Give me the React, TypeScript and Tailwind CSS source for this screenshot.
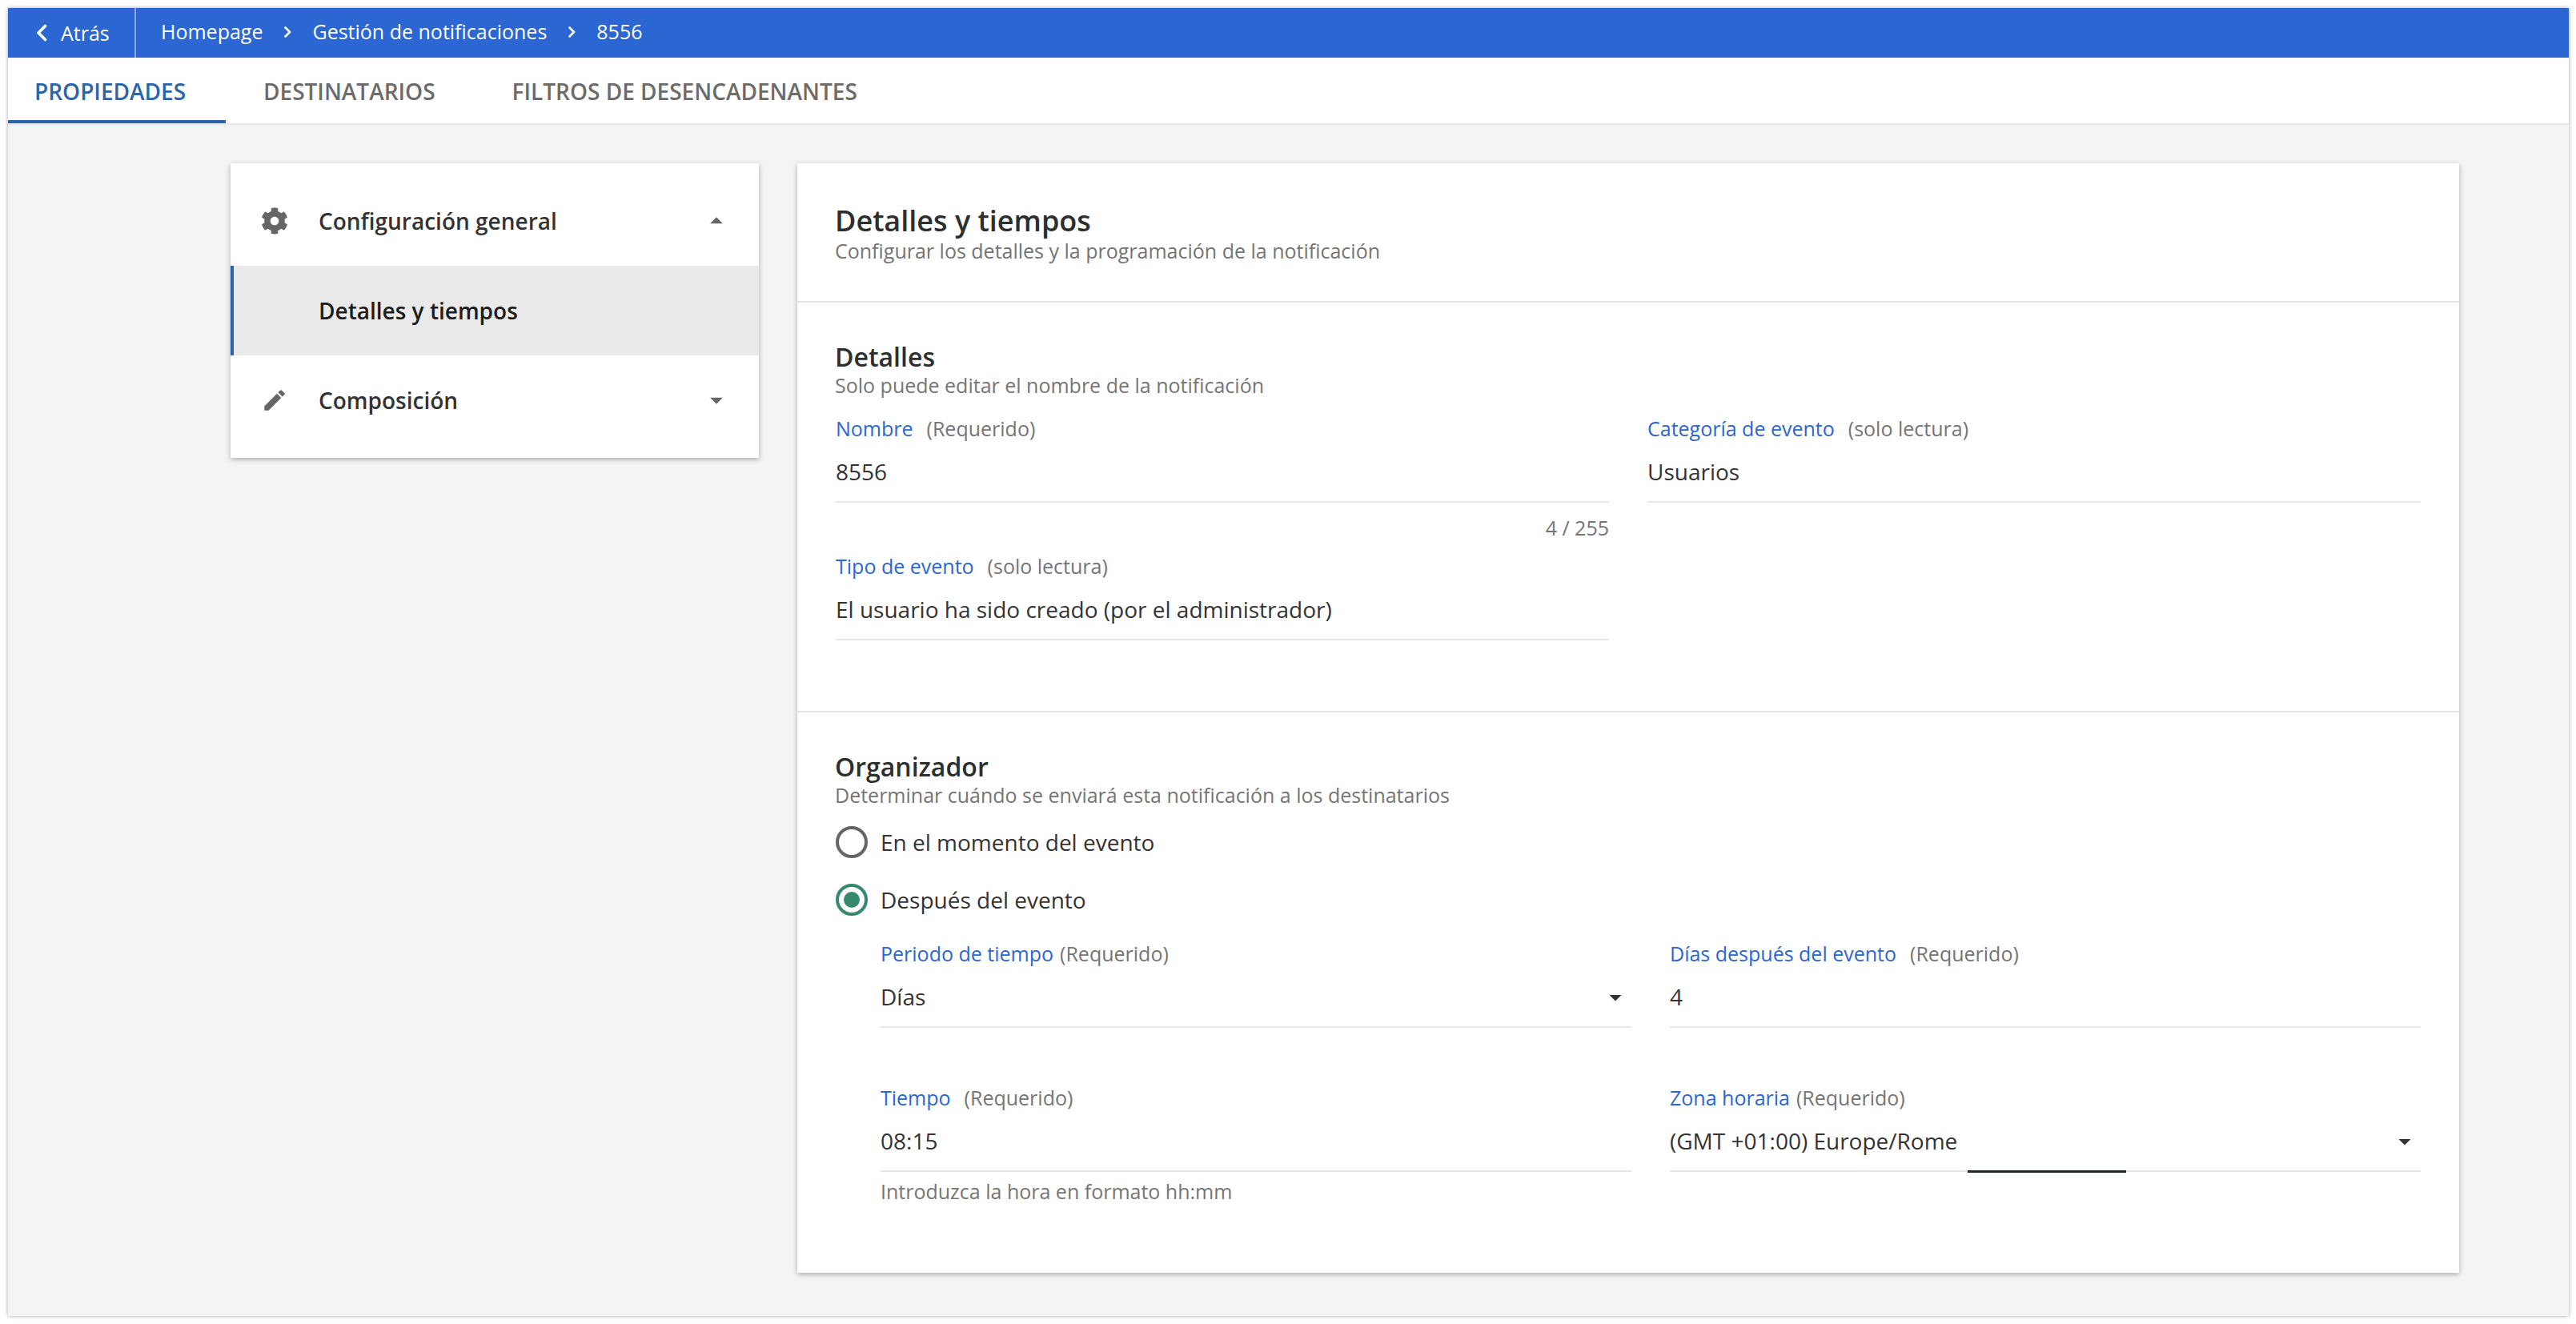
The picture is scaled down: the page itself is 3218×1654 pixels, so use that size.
import { FaCog } from "react-icons/fa";
import { MdArrowDropDown, MdArrowDropUp, MdEdit } from "react-icons/md";

const Chevron = ({ className }: { className: string }) => (
  <svg viewBox="0 0 14 22" className={className} fill="none" stroke="currentColor" strokeWidth="3.6" strokeLinecap="round" strokeLinejoin="round">
    <path d="M11.5 2.5 3 11l8.5 8.5" />
  </svg>
);

const Crumb = () => (
  <svg viewBox="0 0 10 14" className="w-[10px] h-[14px] mx-[26px] text-white" fill="none" stroke="currentColor" strokeWidth="2.6" strokeLinecap="round" strokeLinejoin="round">
    <path d="M2.5 1.5 8 7l-5.500 5.500" />
  </svg>
);

type FieldProps = {
  label: string;
  hint: string;
  value: string;
  hintGap?: string;
  dropdown?: boolean;
  children?: React.ReactNode;
};

const Field = ({ label, hint, value, hintGap = "ml-[17px]", dropdown, children }: FieldProps) => (
  <div className="relative">
    <div className="h-[28px] leading-[28px] text-[25px] whitespace-nowrap">
      <span className="text-[#2b66d2] font-medium">{label}</span>
      <span className={`text-[#757575] ${hintGap}`}>{hint}</span>
    </div>
    <div className="mt-[23px] pb-[18px] border-b-2 border-[#e6e6e6] flex items-center justify-between">
      <span className="h-[36px] leading-[34px] text-[28px] text-[#333333]">{value}</span>
      {dropdown && <MdArrowDropDown className="h-[36px] text-[#333333] mr-[-1px]" size={42} />}
    </div>
    {children}
  </div>
);

const Radio = ({ label, checked }: { label: string; checked?: boolean }) => (
  <div className="flex items-center h-[40px]">
    <span
      className={`w-[40px] h-[40px] rounded-full border-[4px] flex items-center justify-center ${
        checked ? "border-[#368a6b]" : "border-[#666666]"
      }`}
    >
      {checked && <span className="w-[20px] h-[20px] rounded-full bg-[#368a6b]" />}
    </span>
    <span className="ml-[16px] text-[28px] text-[#333333]">{label}</span>
  </div>
);

export default function App() {
  return (
    <div className="w-[3218px] h-[1654px] bg-white pt-[10px] pl-[10px] pr-[9px] pb-[10px] font-['Open_Sans',sans-serif]">
      <div className="h-full flex flex-col bg-[#f4f4f4] shadow-[0_0_5px_rgba(0,0,0,0.35)]">
        <div className="h-[62px] bg-[#2b66d2] flex items-center text-white text-[25px]">
          <div className="h-full w-[160px] border-r-2 border-[#86a8e6] flex items-center pl-[35px]">
            <Chevron className="w-[14px] h-[22px]" />
            <span className="ml-[17px] pt-[1px]">Atrás</span>
          </div>
          <div className="flex items-center pl-[31px] -mt-[3px]">
            <span>Homepage</span>
            <Crumb />
            <span>Gestión de notificaciones</span>
            <Crumb />
            <span>8556</span>
          </div>
        </div>

        <div className="h-[84px] bg-white border-b-2 border-[#e8e8e8] flex items-stretch text-[28px] font-semibold text-[#6b6b6b]">
          <div className="w-[272px] pl-[33px] pt-[6px] flex items-center border-b-[4px] border-[#2b65a8] text-[#2b65a8]">PROPIEDADES</div>
          <div className="ml-[47px] pt-[2px] flex items-center">DESTINATARIOS</div>
          <div className="ml-[96px] pt-[2px] flex items-center">FILTROS DE DESENCADENANTES</div>
        </div>

        <div className="flex-1 flex items-start gap-[48px] pl-[278px] pt-[48px]">
          <div className="w-[660px] py-4 bg-white shadow-[0_2px_6px_rgba(0,0,0,0.3)]">
            <div className="h-[112px] flex items-center pl-[38px] pr-[34px] text-[#333333]">
              <FaCog className="text-[#666666]" size={34} />
              <span className="ml-[38px] flex-1 text-[28px] font-semibold">Configuración general</span>
              <MdArrowDropUp className="text-[#666666]" size={38} />
            </div>
            <div className="h-[112px] flex items-center pl-[106px] bg-[#eaeaea] border-l-[4px] border-[#2b65a8] text-[28px] font-semibold text-[#1c1c1c]">
              Detalles y tiempos
            </div>
            <div className="h-[112px] flex items-center pl-[38px] pr-[34px] text-[#333333]">
              <MdEdit className="text-[#666666]" size={34} />
              <span className="ml-[38px] flex-1 text-[28px] font-semibold">Composición</span>
              <MdArrowDropDown className="text-[#666666]" size={38} />
            </div>
          </div>

          <div className="w-[2076px] bg-white shadow-[0_2px_6px_rgba(0,0,0,0.3)]">
            <div className="h-[174px] pt-[52px] px-[47px] border-b-2 border-[#e6e6e6]">
              <div className="h-[40px] leading-[40px] text-[36px] font-semibold text-[#2b2f2e]">Detalles y tiempos</div>
              <div className="mt-[3px] h-[28px] leading-[28px] text-[25px] text-[#757575]">Configurar los detalles y la programación de la notificación</div>
            </div>

            <div className="h-[512px] pt-[50px] px-[48px] border-b-2 border-[#e6e6e6]">
              <div className="-ml-[1px] h-[36px] leading-[36px] text-[32px] font-semibold text-[#2b2f2e]">Detalles</div>
              <div className="-ml-[1px] mt-[3px] h-[28px] leading-[28px] text-[25px] text-[#757575]">Solo puede editar el nombre de la notificación</div>
              <div className="mt-[26px] grid grid-cols-2 gap-x-[48px]">
                <div>
                  <Field label="Nombre" hint="(Requerido)" value="8556" />
                  <div className="h-[65px] pt-[19px] text-right text-[25px] leading-[24px] text-[#757575]">4 / 255</div>
                  <Field label="Tipo de evento" hint="(solo lectura)" value="El usuario ha sido creado (por el administrador)" />
                </div>
                <Field label="Categoría de evento" hint="(solo lectura)" value="Usuarios" />
              </div>
            </div>

            <div className="h-[700px] pt-[50px] px-[48px]">
              <div className="-ml-[1px] h-[36px] leading-[36px] text-[32px] font-semibold text-[#2b2f2e]">Organizador</div>
              <div className="-ml-[1px] mt-[3px] h-[28px] leading-[28px] text-[25px] text-[#757575]">Determinar cuándo se enviará esta notificación a los destinatarios</div>
              <div className="mt-[25px] flex flex-col gap-[32px]">
                <Radio label="En el momento del evento" />
                <Radio label="Después del evento" checked />
              </div>
              <div className="mt-[33px] ml-[56px] grid grid-cols-2 gap-x-[48px] gap-y-[73px]">
                <Field label="Periodo de tiempo" hint="(Requerido)" hintGap="ml-2" value="Días" dropdown />
                <Field label="Días después del evento" hint="(Requerido)" value="4" />
                <Field label="Tiempo" hint="(Requerido)" value="08:15">
                  <div className="mt-[10px] h-[28px] leading-[28px] text-[25px] text-[#757575]">Introduzca la hora en formato hh:mm</div>
                </Field>
                <Field label="Zona horaria" hint="(Requerido)" hintGap="ml-2" value="(GMT +01:00) Europe/Rome" dropdown>
                  <span className="absolute left-[372px] top-[105px] w-[198px] h-[3px] bg-[#1f2a25]" />
                </Field>
              </div>
            </div>
          </div>
        </div>
      </div>
    </div>
  );
}
